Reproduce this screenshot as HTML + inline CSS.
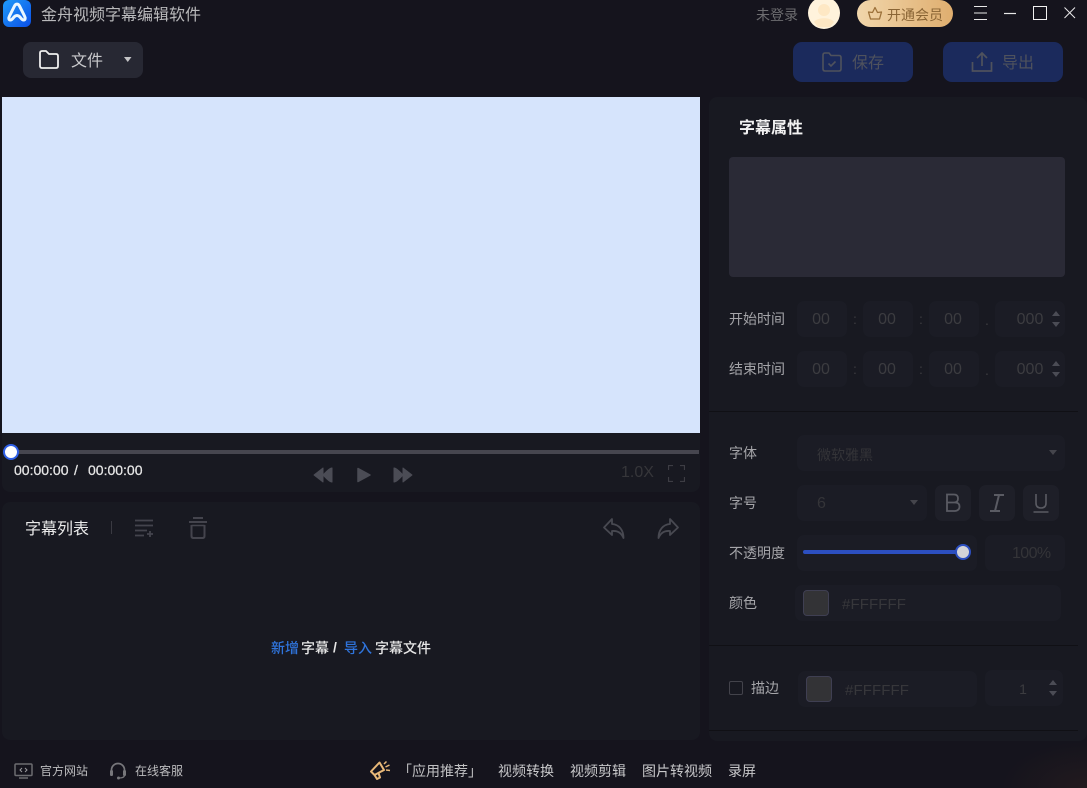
<!DOCTYPE html>
<html lang="zh">
<head>
<meta charset="utf-8">
<style>
*{box-sizing:border-box;margin:0;padding:0}
html,body{width:1087px;height:788px;overflow:hidden;background:#15141d}
body{position:relative;font-family:"Liberation Sans","Noto Sans CJK SC",sans-serif;font-size:14px;color:#bbb}
.a{position:absolute}
.t{position:absolute;white-space:nowrap;line-height:20px}
.box{position:absolute;background:#1b1c25;border-radius:7px}
.lab{position:absolute;white-space:nowrap;font-size:14px;line-height:20px;color:#a5a5a9;left:729px}
.num{position:absolute;font-size:16px;line-height:36px;height:36px;color:#3c3c40;text-align:center;white-space:nowrap}
.sep{position:absolute;font-size:14px;color:#3c3c40;line-height:20px}
.m{font-weight:500;font-size:14px;color:#e6e6e6}
svg{position:absolute;display:block}
</style>
</head>
<body>
<!-- panels -->
<div class="a" style="left:2px;top:433px;width:698px;height:59px;background:#181921;border-radius:0 0 8px 8px"></div>
<div class="a" style="left:2px;top:502px;width:698px;height:238px;background:#181921;border-radius:8px"></div>
<div class="a" style="left:709px;top:97px;width:378px;height:644px;background:#181921;border-radius:8px"></div>
<div class="a" style="left:2px;top:97px;width:698px;height:336px;background:#d6e4fc"></div>

<!-- title bar -->
<svg style="left:3px;top:0" width="28" height="27" viewBox="0 0 28 27">
<defs><linearGradient id="g" x1="0" y1="0" x2="1" y2="1"><stop offset="0" stop-color="#1f9bf8"/><stop offset="1" stop-color="#0b4fe8"/></linearGradient></defs>
<rect width="28" height="27" rx="6" fill="url(#g)"/>
<path d="M7.500 20 C5.500 20 5.500 18 6.500 16 L11.500 6 C12.800 3.500 15.200 3.500 16.500 6 L21.500 16 C22.500 18 22.500 20 20.500 20 C18 20 17.500 15.500 14 15.500 C10.500 15.500 10 20 7.500 20Z" fill="none" stroke="#eaf7ff" stroke-width="3" stroke-linejoin="round"/>
</svg>
<div class="t" style="left:41px;top:6px;font-size:16px;color:#b9b9bb">金舟视频字幕编辑软件</div>

<div class="t" style="left:756px;top:5px;font-size:14px;color:#6d6d70">未登录</div>
<svg style="left:808px;top:0" width="32" height="29" viewBox="0 0 32 29">
<circle cx="16" cy="13" r="16" fill="#fff3dc"/>
<circle cx="16" cy="10" r="6" fill="#fee8c4"/>
<path d="M6 22 C9 17 23 17 26 22 L22 27 H10Z" fill="#fee8c4"/>
</svg>
<div class="a" style="left:857px;top:0;width:96px;height:27px;border-radius:14px;background:linear-gradient(90deg,#f1d6ab,#dfae6f)"></div>
<svg style="left:867px;top:6px" width="16" height="15" viewBox="0 0 16 15">
<path d="M3.500 13 H12.500 L14.500 6 L10.500 6.500 L8 1.500 L5.500 6.500 L1.500 6 Z" fill="none" stroke="#9c713a" stroke-width="1.300" stroke-linejoin="round"/>
</svg>
<div class="t" style="left:887px;top:5px;font-size:14px;color:#8a6535">开通会员</div>
<svg style="left:974px;top:6px" width="13" height="14" viewBox="0 0 13 14"><path d="M0 .5H13M0 7H13M0 13.500H13" stroke="#e8e8e8" stroke-width="1"/></svg>
<svg style="left:1004px;top:12px" width="13" height="3" viewBox="0 0 13 3"><path d="M0 1.500H12" stroke="#e8e8e8" stroke-width="1.200"/></svg>
<svg style="left:1033px;top:6px" width="14" height="14" viewBox="0 0 14 14"><rect x=".5" y=".5" width="13" height="13" fill="none" stroke="#f0f0f0" stroke-width="1"/></svg>
<svg style="left:1064px;top:7px" width="12" height="12" viewBox="0 0 12 12"><path d="M.5 .5L11 11M11 .5L.5 11" stroke="#e8e8e8" stroke-width="1"/></svg>

<!-- toolbar -->
<div class="a" style="left:23px;top:42px;width:120px;height:36px;border-radius:8px;background:#272833"></div>
<svg style="left:38px;top:49px" width="22" height="20" viewBox="0 0 22 20">
<path d="M2 4 Q2 2 4 2 H8 L11 5 H18 Q20 5 20 7 V17 Q20 19 18 19 H4 Q2 19 2 17 Z" fill="none" stroke="#eee" stroke-width="1.800" stroke-linejoin="round"/>
</svg>
<div class="t" style="left:71px;top:52px;font-size:16px;color:#c9c9cc">文件</div>
<svg style="left:123px;top:56px" width="10" height="7" viewBox="0 0 10 7"><path d="M1 1H8.500L4.750 6Z" fill="#c4c4c6"/></svg>

<div class="a" style="left:793px;top:42px;width:120px;height:40px;border-radius:9px;background:#1b2a5c"></div>
<svg style="left:821px;top:51px" width="22" height="22" viewBox="0 0 22 22">
<path d="M2 4 Q2 2 4 2 H8 L10 4.500 H18 Q20 4.500 20 6.500 V18 Q20 20 18 20 H4 Q2 20 2 18 Z" fill="none" stroke="#4f525d" stroke-width="1.600"/>
<path d="M7.500 12.500 L10 15 L14.500 10.500" fill="none" stroke="#4f525d" stroke-width="1.600"/>
</svg>
<div class="t" style="left:852px;top:54px;font-size:16px;color:#4f525d">保存</div>
<div class="a" style="left:943px;top:42px;width:120px;height:40px;border-radius:9px;background:#1b2a5c"></div>
<svg style="left:971px;top:51px" width="22" height="22" viewBox="0 0 22 22">
<path d="M1.500 11 V20 H20.500 V11" fill="none" stroke="#4f525d" stroke-width="1.700"/>
<path d="M11 15 V2 M6 7 L11 2 L16 7" fill="none" stroke="#4f525d" stroke-width="1.700"/>
</svg>
<div class="t" style="left:1002px;top:54px;font-size:16px;color:#4f525d">导出</div>

<!-- player -->
<div class="a" style="left:11px;top:450px;width:688px;height:4px;background:#46464f"></div>
<div class="a" style="left:3px;top:444px;width:16px;height:16px;border-radius:50%;background:#fff;border:2.500px solid #2f5fe6"></div>
<div class="t" style="left:14px;top:460px;font-size:14px;color:#e6e6e6;-webkit-text-stroke:.25px #e6e6e6">00:00:00</div>
<div class="t" style="left:74px;top:460px;font-size:14px;color:#e6e6e6;-webkit-text-stroke:.25px #e6e6e6">/</div>
<div class="t" style="left:88px;top:460px;font-size:14px;color:#e6e6e6;-webkit-text-stroke:.25px #e6e6e6">00:00:00</div>
<svg style="left:313px;top:466px" width="20" height="18" viewBox="0 0 20 18"><path d="M10 2 L1 9 L10 16Z M19 2 Q17 1.500 11 8 V10 Q17 16.500 19 16Z" fill="#4b4c55" stroke="#4b4c55" stroke-linejoin="round"/></svg>
<svg style="left:356px;top:466px" width="16" height="18" viewBox="0 0 16 18"><path d="M2 2.500 L14 9 L2 15.500Z" fill="#4b4c55" stroke="#4b4c55" stroke-width="1.500" stroke-linejoin="round"/></svg>
<svg style="left:393px;top:466px" width="20" height="18" viewBox="0 0 20 18"><path d="M10 2 L19 9 L10 16Z M1 2 Q3 1.500 9 8 V10 Q3 16.500 1 16Z" fill="#4b4c55" stroke="#4b4c55" stroke-linejoin="round"/></svg>
<div class="t" style="left:621px;top:463px;font-size:16px;color:#36363a">1.0X</div>
<svg style="left:668px;top:465px" width="17" height="17" viewBox="0 0 17 17"><path d="M.5 5V.5H5M12 .5H16.500V5M16.500 12V16.500H12M5 16.500H.5V12" fill="none" stroke="#3d3d44" stroke-width="1.200"/></svg>

<!-- subtitle list -->
<div class="t" style="left:25px;top:520px;font-size:16px;color:#eaeaea">字幕列表</div>
<div class="a" style="left:111px;top:521px;width:1px;height:13px;background:#3a3a42"></div>
<svg style="left:134px;top:519px" width="20" height="20" viewBox="0 0 20 20"><path d="M1 1.500H19M1 6.500H19M1 11.500H13M1 16.500H10M13 15H19M16 12V18" fill="none" stroke="#44444d" stroke-width="1.800"/></svg>
<svg style="left:188px;top:517px" width="20" height="22" viewBox="0 0 20 22"><path d="M5 1H15M1 5H19" stroke="#44444d" stroke-width="2" fill="none"/><path d="M3.500 8V19Q3.500 21 5.500 21H14.500Q16.500 21 16.500 19V8" fill="none" stroke="#44444d" stroke-width="2"/><path d="M3.500 8.500H16.500" stroke="#44444d" stroke-width="1.500"/></svg>
<svg style="left:602px;top:517px" width="24" height="24" viewBox="0 0 24 24"><path d="M10 2 L2 10.500 L10 18 V14 C15 13.500 19 15 21.500 21 C21.500 13 17 7.500 10 7Z" fill="none" stroke="#484951" stroke-width="1.800" stroke-linejoin="round"/></svg>
<svg style="left:656px;top:517px" width="24" height="24" viewBox="0 0 24 24"><path d="M14 2 L22 10.500 L14 18 V14 C9 13.500 5 15 2.500 21 C2.500 13 7 7.500 14 7Z" fill="none" stroke="#484951" stroke-width="1.800" stroke-linejoin="round"/></svg>
<div class="t m" style="left:271px;top:638px;color:#2f74dc">新增</div>
<div class="t m" style="left:301px;top:638px">字幕</div>
<div class="t m" style="left:333px;top:637px;font-weight:bold">/</div>
<div class="t m" style="left:344px;top:638px;color:#2f74dc">导入</div>
<div class="t m" style="left:375px;top:638px">字幕文件</div>

<!-- right panel -->
<div class="t" style="left:739px;top:119px;font-size:16px;font-weight:bold;color:#f2f2f2">字幕属性</div>
<div class="a" style="left:729px;top:157px;width:336px;height:120px;background:#2a2a36;border-radius:4px"></div>

<div class="lab" style="top:309px">开始时间</div>
<div class="box" style="left:797px;top:301px;width:50px;height:36px"></div><div class="num" style="left:796px;top:302px;width:50px">00</div>
<div class="sep" style="left:853px;top:309px">:</div>
<div class="box" style="left:863px;top:301px;width:50px;height:36px"></div><div class="num" style="left:862px;top:302px;width:50px">00</div>
<div class="sep" style="left:919px;top:309px">:</div>
<div class="box" style="left:929px;top:301px;width:50px;height:36px"></div><div class="num" style="left:928px;top:302px;width:50px">00</div>
<div class="sep" style="left:985px;top:310px">.</div>
<div class="box" style="left:995px;top:301px;width:70px;height:36px"></div><div class="num" style="left:1016px;top:302px;width:28px">000</div>
<svg style="left:1051px;top:310px" width="10" height="18" viewBox="0 0 10 18"><path d="M5 1L9 6H1ZM1 12H9L5 17Z" fill="#4b4c55"/></svg>

<div class="lab" style="top:359px">结束时间</div>
<div class="box" style="left:797px;top:351px;width:50px;height:36px"></div><div class="num" style="left:796px;top:352px;width:50px">00</div>
<div class="sep" style="left:853px;top:359px">:</div>
<div class="box" style="left:863px;top:351px;width:50px;height:36px"></div><div class="num" style="left:862px;top:352px;width:50px">00</div>
<div class="sep" style="left:919px;top:359px">:</div>
<div class="box" style="left:929px;top:351px;width:50px;height:36px"></div><div class="num" style="left:928px;top:352px;width:50px">00</div>
<div class="sep" style="left:985px;top:360px">.</div>
<div class="box" style="left:995px;top:351px;width:70px;height:36px"></div><div class="num" style="left:1016px;top:352px;width:28px">000</div>
<svg style="left:1051px;top:360px" width="10" height="18" viewBox="0 0 10 18"><path d="M5 1L9 6H1ZM1 12H9L5 17Z" fill="#4b4c55"/></svg>

<div class="a" style="left:709px;top:411px;width:369px;height:1px;background:#101015"></div>

<div class="lab" style="top:443px">字体</div>
<div class="box" style="left:797px;top:435px;width:268px;height:36px"></div>
<div class="t" style="left:817px;top:445px;font-size:14px;color:#343438">微软雅黑</div>
<svg style="left:1048px;top:449px" width="10" height="7" viewBox="0 0 10 7"><path d="M1 1H9L5 6Z" fill="#45454c"/></svg>

<div class="lab" style="top:493px">字号</div>
<div class="box" style="left:797px;top:485px;width:130px;height:36px"></div>
<div class="t" style="left:817px;top:494px;font-size:16px;color:#343438">6</div>
<svg style="left:909px;top:499px" width="10" height="7" viewBox="0 0 10 7"><path d="M1 1H9L5 6Z" fill="#45454c"/></svg>
<div class="box" style="left:935px;top:485px;width:36px;height:36px;background:#1e1f28"></div>
<div class="box" style="left:979px;top:485px;width:36px;height:36px;background:#1e1f28"></div>
<div class="box" style="left:1023px;top:485px;width:36px;height:36px;background:#1e1f28"></div>
<svg style="left:945px;top:493px" width="16" height="20" viewBox="0 0 16 20"><path d="M2 1.500H9Q13 1.500 13 5.500T9 9.500H2ZM2 9.500H10Q14.500 9.500 14.500 13.500T10 18H2Z" fill="none" stroke="#5a5b63" stroke-width="1.800"/></svg>
<svg style="left:989px;top:493px" width="16" height="20" viewBox="0 0 16 20"><path d="M5 2H15M1 18H11M10 2L6 18" fill="none" stroke="#5a5b63" stroke-width="2"/></svg>
<svg style="left:1033px;top:493px" width="16" height="20" viewBox="0 0 16 20"><path d="M3 1V10Q3 15 8 15T13 10V1M.5 19H15.500" fill="none" stroke="#5a5b63" stroke-width="1.600"/></svg>

<div class="lab" style="top:543px">不透明度</div>
<div class="box" style="left:797px;top:535px;width:180px;height:36px"></div>
<div class="a" style="left:803px;top:550px;width:160px;height:4px;background:#2c4fc0;border-radius:2px"></div>
<div class="a" style="left:955px;top:544px;width:16px;height:16px;border-radius:50%;background:#d4d4d8;border:2px solid #2c4fc0"></div>
<div class="box" style="left:985px;top:535px;width:80px;height:36px"></div>
<div class="t" style="left:1012px;top:544px;font-size:16px;color:#343438;letter-spacing:-.6px">100%</div>

<div class="lab" style="top:593px">颜色</div>
<div class="box" style="left:795px;top:585px;width:266px;height:36px"></div>
<div class="a" style="left:803px;top:590px;width:26px;height:26px;border-radius:4px;background:#333336;border:1px solid #3f3f52"></div>
<div class="t" style="left:842px;top:595px;font-size:15px;color:#37373b;letter-spacing:.1px">#FFFFFF</div>

<div class="a" style="left:709px;top:645px;width:369px;height:1px;background:#101015"></div>

<div class="a" style="left:729px;top:681px;width:14px;height:14px;border-radius:2px;border:1px solid #43434b"></div>
<div class="t" style="left:751px;top:678px;font-size:14px;color:#a5a5a9">描边</div>
<div class="box" style="left:798px;top:671px;width:179px;height:36px"></div>
<div class="a" style="left:806px;top:676px;width:26px;height:26px;border-radius:4px;background:#333336;border:1px solid #3f3f52"></div>
<div class="t" style="left:845px;top:681px;font-size:15px;color:#37373b;letter-spacing:.1px">#FFFFFF</div>
<div class="box" style="left:985px;top:670px;width:78px;height:36px"></div>
<div class="num" style="left:1013px;top:671px;width:20px;font-size:14px">1</div>
<svg style="left:1048px;top:679px" width="10" height="18" viewBox="0 0 10 18"><path d="M5 1L9 6H1ZM1 12H9L5 17Z" fill="#4b4c55"/></svg>

<div class="a" style="left:709px;top:730px;width:369px;height:1px;background:#101015"></div>

<!-- footer -->
<svg style="left:14px;top:763px" width="19" height="16" viewBox="0 0 19 16"><rect x="1" y="1" width="17" height="11.500" rx="1" fill="none" stroke="#6c6c70" stroke-width="1.500"/><path d="M5 15H14" stroke="#6c6c70" stroke-width="1.500"/><path d="M8 5L6 7L8 9M11 5L13 7L11 9" fill="none" stroke="#9a9a9e" stroke-width="1"/></svg>
<div class="t" style="left:40px;top:761px;font-size:12px;color:#bcbcbe">官方网站</div>
<svg style="left:109px;top:762px" width="18" height="18" viewBox="0 0 18 18"><path d="M2.500 10V8A6.500 6.500 0 0 1 15.500 8V10" fill="none" stroke="#77777b" stroke-width="1.700"/><rect x="1" y="8" width="3" height="6" rx="1.400" fill="#77777b"/><rect x="14" y="8" width="3" height="6" rx="1.400" fill="#77777b"/><path d="M15.500 13Q15.500 16 10 16" fill="none" stroke="#77777b" stroke-width="1.200"/><circle cx="9.500" cy="16" r="1.500" fill="#77777b"/></svg>
<div class="t" style="left:135px;top:761px;font-size:12px;color:#bcbcbe">在线客服</div>
<svg style="left:369px;top:760px" width="22" height="20" viewBox="0 0 22 20"><path d="M2 11.500L10.500 2.500L15 10L5.500 15Z M5.500 15L8 19L11 17.500L9.500 13" fill="none" stroke="#e8b878" stroke-width="2" stroke-linejoin="round"/><path d="M15 4L17.500 1.500M16.500 7L20.500 5M17 10L21 10.500" stroke="#e8b878" stroke-width="1.500"/></svg>
<div class="t" style="left:398px;top:761px;font-size:14px;color:#c0c0c2">「应用推荐」</div>
<div class="t" style="left:498px;top:761px;font-size:14px;color:#c8c8ca">视频转换</div>
<div class="t" style="left:570px;top:761px;font-size:14px;color:#c8c8ca">视频剪辑</div>
<div class="t" style="left:642px;top:761px;font-size:14px;color:#c8c8ca">图片转视频</div>
<div class="t" style="left:728px;top:761px;font-size:14px;color:#c8c8ca">录屏</div>
<div class="a" style="left:1000px;top:741px;width:87px;height:47px;background:radial-gradient(ellipse at 100% 100%,#221a1e 0,#15141d 70%)"></div>
</body>
</html>
